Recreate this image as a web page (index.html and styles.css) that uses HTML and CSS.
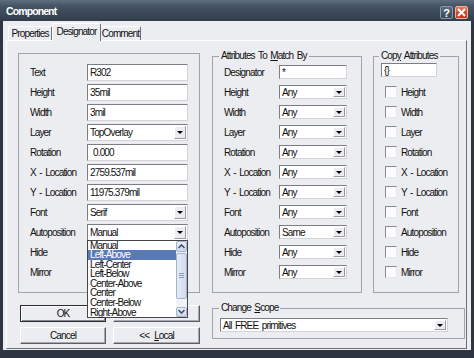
FILE: index.html
```html
<!DOCTYPE html>
<html>
<head>
<meta charset="utf-8">
<title>Component</title>
<link rel="stylesheet" href="styles.css">
</head>
<body>
<div class="window">
  <div class="titlebar">
    <span class="title">Component</span>
    <div class="tb-buttons">
      <span class="tb-btn help">?</span>
      <span class="tb-btn close"><svg width="9" height="9" viewBox="0 0 9 9"><path d="M1 1L8 8M8 1L1 8" stroke="#fff" stroke-width="2"/></svg></span>
    </div>
  </div>
  <div class="client">
    <div class="tabs">
      <span class="tab first">Properties</span>
      <span class="tab active">Designator</span>
      <span class="tab last">Comment</span>
    </div>
    <div class="panel">
      <div class="box">
        <div class="row"><span class="lbl">Text</span><span class="field"><span class="val">R302</span></span></div>
        <div class="row"><span class="lbl">Height</span><span class="field"><span class="val">35mil</span></span></div>
        <div class="row"><span class="lbl">Width</span><span class="field"><span class="val">3mil</span></span></div>
        <div class="row"><span class="lbl">Layer</span><span class="field"><span class="val">TopOverlay</span><span class="arrow"></span></span></div>
        <div class="row"><span class="lbl">Rotation</span><span class="field"><span class="val indent">0.000</span></span></div>
        <div class="row"><span class="lbl">X - Location</span><span class="field"><span class="val">2759.537mil</span></span></div>
        <div class="row"><span class="lbl">Y - Location</span><span class="field"><span class="val">11975.379mil</span></span></div>
        <div class="row"><span class="lbl">Font</span><span class="field"><span class="val">Serif</span><span class="arrow"></span></span></div>
        <div class="row"><span class="lbl">Autoposition</span>
          <span class="field open"><span class="val">Manual</span><span class="arrow"></span>
            <div class="droplist">
              <ul class="items">
                <li>Manual</li>
                <li class="sel">Left-Above</li>
                <li>Left-Center</li>
                <li>Left-Below</li>
                <li>Center-Above</li>
                <li>Center</li>
                <li>Center-Below</li>
                <li>Right-Above</li>
              </ul>
              <div class="sb">
                <span class="sb-btn up"><svg width="9" height="7" viewBox="0 0 9 7"><path d="M1.5 5L4.5 2L7.5 5" fill="none" stroke="#3f5378" stroke-width="1.6"/></svg></span>
                <span class="thumb"><i></i><i></i><i></i></span>
                <span class="sb-space"></span>
                <span class="sb-btn down"><svg width="9" height="7" viewBox="0 0 9 7"><path d="M1.5 2L4.5 5L7.5 2" fill="none" stroke="#3f5378" stroke-width="1.6"/></svg></span>
              </div>
            </div>
          </span>
        </div>
        <div class="row"><span class="lbl">Hide</span></div>
        <div class="row"><span class="lbl">Mirror</span></div>
      </div>

      <fieldset class="group match">
        <legend>Attributes To <u>M</u>atch By</legend>
        <div class="row"><span class="lbl">Designator</span><span class="field"><span class="val">*</span></span></div>
        <div class="row"><span class="lbl">Height</span><span class="field"><span class="val">Any</span><span class="arrow"></span></span></div>
        <div class="row"><span class="lbl">Width</span><span class="field"><span class="val">Any</span><span class="arrow"></span></span></div>
        <div class="row"><span class="lbl">Layer</span><span class="field"><span class="val">Any</span><span class="arrow"></span></span></div>
        <div class="row"><span class="lbl">Rotation</span><span class="field"><span class="val">Any</span><span class="arrow"></span></span></div>
        <div class="row"><span class="lbl">X - Location</span><span class="field"><span class="val">Any</span><span class="arrow"></span></span></div>
        <div class="row"><span class="lbl">Y - Location</span><span class="field"><span class="val">Any</span><span class="arrow"></span></span></div>
        <div class="row"><span class="lbl">Font</span><span class="field"><span class="val">Any</span><span class="arrow"></span></span></div>
        <div class="row"><span class="lbl">Autoposition</span><span class="field"><span class="val">Same</span><span class="arrow"></span></span></div>
        <div class="row"><span class="lbl">Hide</span><span class="field"><span class="val">Any</span><span class="arrow"></span></span></div>
        <div class="row"><span class="lbl">Mirror</span><span class="field"><span class="val">Any</span><span class="arrow"></span></span></div>
      </fieldset>

      <fieldset class="group copy">
        <legend>Cop<u>y</u> Attributes</legend>
        <div class="row first"><span class="field"><span class="val">{}</span></span></div>
        <div class="row"><span class="cb"></span><span>Height</span></div>
        <div class="row"><span class="cb"></span><span>Width</span></div>
        <div class="row"><span class="cb"></span><span>Layer</span></div>
        <div class="row"><span class="cb"></span><span>Rotation</span></div>
        <div class="row"><span class="cb"></span><span>X - Location</span></div>
        <div class="row"><span class="cb"></span><span>Y - Location</span></div>
        <div class="row"><span class="cb"></span><span>Font</span></div>
        <div class="row"><span class="cb"></span><span>Autoposition</span></div>
        <div class="row"><span class="cb"></span><span>Hide</span></div>
        <div class="row"><span class="cb"></span><span>Mirror</span></div>
      </fieldset>

      <div class="btns">
        <span class="btn default">OK</span>
        <span class="btn"></span>
        <span class="btn">Cancel</span>
        <span class="btn">&lt;&lt; <u>L</u>ocal</span>
      </div>

      <fieldset class="group scope">
        <legend>Change <u>S</u>cope</legend>
        <span class="field"><span class="val">All FREE primitives</span><span class="arrow"></span></span>
      </fieldset>
    </div>
  </div>
</div>
</body>
</html>
```
FILE: styles.css
```css
* { box-sizing: border-box; }
html, body { margin: 0; padding: 0; }
body {
  width: 474px; height: 358px; overflow: hidden;
  font-family: "Liberation Sans", Arial, sans-serif;
  font-size: 10px; letter-spacing: -0.85px; word-spacing: 1.5px; color: #111;
  background: #2d3641;
}
.window { width: 474px; height: 358px; display: flex; flex-direction: column; background: #2d3641; }

.titlebar {
  height: 21px; flex: none;
  display: flex; align-items: center; justify-content: space-between;
  padding: 0 6px 0 6px;
  background: linear-gradient(#5f6e80 0%, #445363 30%, #313d4a 100%);
}
.title { color: #fff; font-weight: bold; font-size: 10.5px; letter-spacing: -0.9px; padding-top: 1px; }
.tb-buttons { display: flex; gap: 2px; margin-top: 4px; }
.tb-btn {
  width: 13px; height: 13px; display: flex; align-items: center; justify-content: center;
  border-radius: 2px; letter-spacing: 0;
}
.help {
  background: linear-gradient(#5b6b80, #3b4858);
  border: 1px solid #8a98aa;
  color: #fff; font-weight: bold; font-size: 11px;
}
.close {
  background: linear-gradient(#f07a5c, #d5472a 55%, #bf3518);
  border: 1px solid #f0b0a0;
}

.client {
  margin: 0 3px; height: 329px; flex: none;
  background: #ecedf0;
  padding: 2px 0 0 3px;
}

.tabs { display: flex; align-items: flex-end; height: 17px; margin-left: 2px; position: relative; z-index: 1; }
.tab {
  height: 14px; line-height: 13px; text-align: center; white-space: nowrap;
  border-top: 1px solid #fff; border-right: 1px solid #6e6e76;
  border-radius: 2px 2px 0 0;
}
.tab.first { border-left: 1px solid #fff; width: 44px; }
.tab.active {
  height: 18px; margin-bottom: -1px; background: #ecedf0;
  border-left: 1px solid #fff; line-height: 15px; width: 49px;
}
.tab.last { width: 40px; }

.panel {
  width: 461px; height: 309px;
  border: 1px solid; border-color: #fff #6e6e76 #6e6e76 #fff;
  display: grid;
  grid-template-columns: 182px 150px 85px;
  grid-template-rows: 252px auto;
  column-gap: 12px; row-gap: 9px;
  padding-left: 11px;
}

.box {
  align-self: end; height: 240px;
  border: 1px solid #a2a2aa;
  padding: 8px 0 0 11px;
}
.row { display: flex; align-items: center; height: 20px; white-space: nowrap; }
.lbl { width: 57px; flex: none; }

.field {
  display: flex; align-items: stretch;
  width: 101px; height: 17px;
  background: #fff;
  border: 1px solid; border-color: #7d7d86 #d4d4d8 #d4d4d8 #7d7d86;
  position: relative;
}
.val { flex: 1; padding-left: 2px; display: flex; align-items: center; white-space: nowrap; overflow: hidden; }
.val.indent { padding-left: 5px; }
.arrow {
  width: 12px; flex: none; margin: 1px;
  background: #ededf0;
  border: 1px solid; border-color: #fff #9a9aa2 #9a9aa2 #fff;
  display: flex; align-items: center; justify-content: center;
}
.arrow::after {
  content: ""; width: 0; height: 0;
  border-left: 3px solid transparent; border-right: 3px solid transparent;
  border-top: 3px solid #000;
}

.group {
  margin: 0; min-width: 0;
  border: 1px solid #a2a2aa;
  padding: 0 0 0 11px;
}
.group legend { padding: 0 2px; margin-left: -5px; line-height: 12px; font-size: 10px; white-space: nowrap; }
.match, .copy { align-self: end; height: 243px; }
.match .lbl { width: 55px; }
.match .field { width: 68px; height: 14px; }

.copy { margin-left: -1px; padding-left: 7px; }
.copy legend { margin-left: -2px; }
.copy .field { width: 56px; height: 14px; }
.copy .row.first { margin-top: -2px; margin-bottom: 2px; }
.cb {
  width: 12px; height: 12px; flex: none; margin: 0 4px 0 4px;
  background: #fbfbfc;
  border: 1px solid; border-color: #8a8a92 #e8e8ec #e8e8ec #8a8a92;
}

.open .droplist {
  position: absolute; top: 100%; left: -1px; z-index: 10;
  width: 101px; height: 78px;
  background: #fff; border: 1px solid #45454e;
  display: flex;
}
.items { list-style: none; margin: 0; padding: 0; flex: 1; }
.items li { height: 9.6px; line-height: 9.6px; padding-left: 2px; white-space: nowrap; }
.items li.sel { background: #587ab6; color: #fff; }
.sb { width: 11px; flex: none; display: flex; flex-direction: column; background: #f1f3f7; }
.sb-btn {
  height: 11px; flex: none;
  background: linear-gradient(#e9eef7, #cfd9ea);
  border: 1px solid #a4b2cb; border-radius: 2px;
  display: flex; align-items: center; justify-content: center;
}
.sb-btn.down { height: 10px; }
.thumb {
  height: 46px; flex: none; margin-top: 1px;
  background: linear-gradient(90deg, #e6ebf5, #d3dcec);
  border: 1px solid #a4b2cb; border-radius: 2px;
  display: flex; flex-direction: column; align-items: center; justify-content: center; gap: 1px;
}
.thumb i { display: block; width: 5px; height: 1px; background: #8c9ab6; }
.sb-space { flex: 1; }

.btns {
  display: grid; grid-template-columns: 86px 87px; grid-auto-rows: 17px;
  column-gap: 7px; row-gap: 5px;
  margin: 3px 0 0 2px; align-self: start;
}
.btn {
  display: flex; align-items: center; justify-content: center; white-space: pre;
  background: #ecedf0; word-spacing: 3px;
  border: 1px solid; border-color: #fff #5e5e66 #5e5e66 #fff;
  box-shadow: inset -1px -1px 0 #a8a8b0;
}
.btn.default { border-color: #2a2a30; box-shadow: inset 1px 1px 0 #fff, inset -1px -1px 0 #8a8a92; }

.scope {
  grid-column: 2 / 4; align-self: start;
  height: 37px; margin-right: -6px;
  padding: 4px 0 0 7px;
}
.scope legend { margin-left: -1px; }
.scope .field { width: 228px; height: 14px; }
```
